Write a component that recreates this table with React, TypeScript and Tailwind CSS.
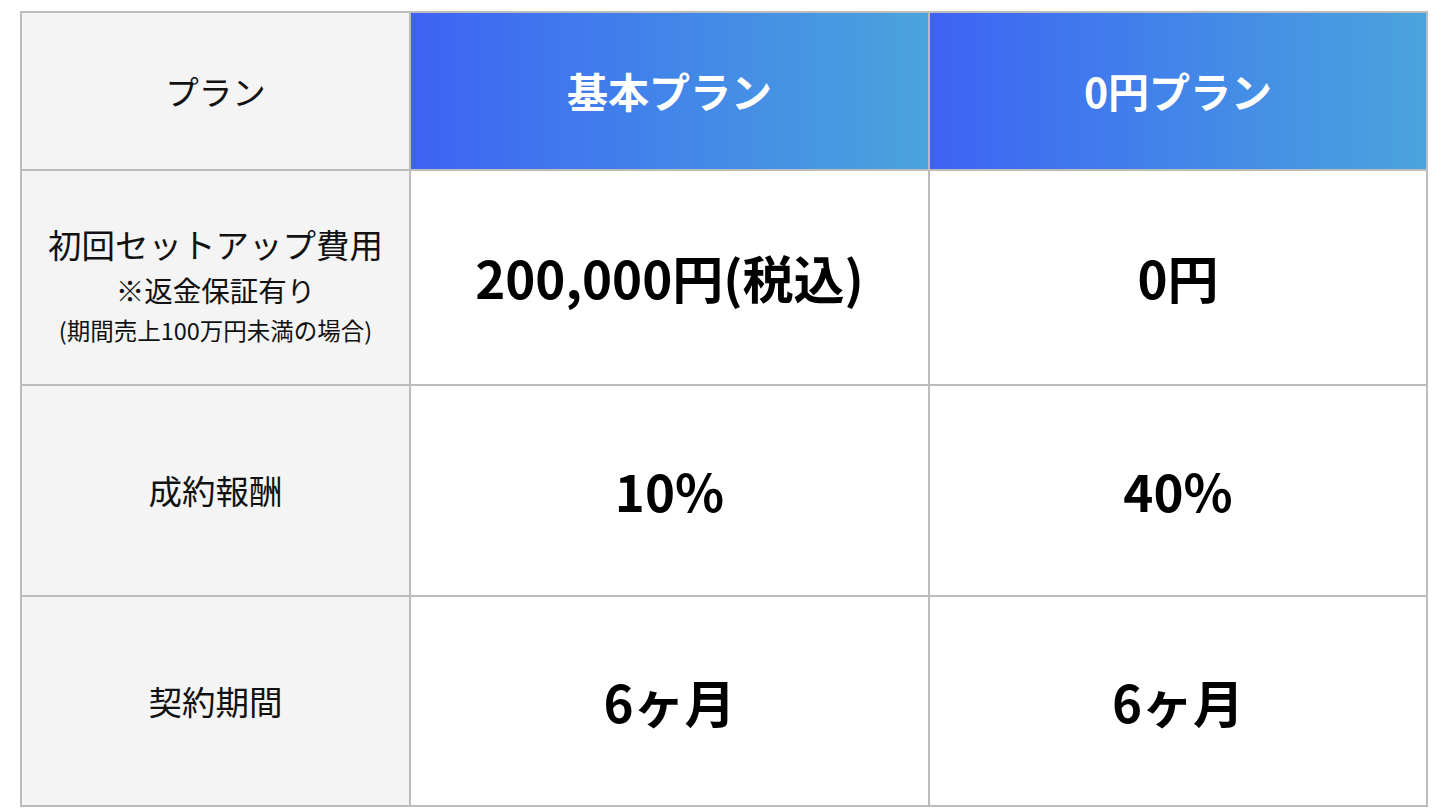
const FONT = '"Noto Sans CJK JP", "Noto Sans", sans-serif';

const rows: { label: React.ReactNode; basic: string; zero: string; h: string }[] = [
  {
    label: (
      <div className="flex flex-col items-center pt-[13px]">
        <span className="text-[33.5px] leading-[48px]">初回セットアップ費用</span>
        <span className="text-[28.5px] leading-[44px]">※返金保証有り</span>
        <span className="text-[23.5px] leading-[36px]">(期間売上100万円未満の場合)</span>
      </div>
    ),
    basic: '200,000円(税込)',
    zero: '0円',
    h: 'h-[215px]',
  },
  { label: <span className="text-[33.5px]">成約報酬</span>, basic: '10%', zero: '40%', h: 'h-[211px]' },
  { label: <span className="text-[33.5px]">契約期間</span>, basic: '6ヶ月', zero: '6ヶ月', h: 'h-[210px]' },
];

const headCell =
  'flex items-center justify-center border-r-2 border-b-2 border-[#bcbcbc] bg-gradient-to-r from-[#3f62f4] to-[#4ca3dc] text-[41px] font-bold text-white';

const valueCell =
  'flex items-center justify-center border-r-2 border-b-2 border-[#bcbcbc] bg-white text-[51px] font-bold text-black';

export default function App() {
  return (
    <div className="min-h-screen bg-white pl-[20px] pt-[11px]" style={{ fontFamily: FONT }}>
      <div className="grid w-[1408px] grid-cols-[389px_519px_498px] border-l-2 border-t-2 border-[#bcbcbc] text-[#111]">
        <div className="flex h-[158px] items-center justify-center border-r-2 border-b-2 border-[#bcbcbc] bg-[#f4f4f4] text-[33.5px]">
          プラン
        </div>
        <div className={`${headCell} h-[158px]`}>基本プラン</div>
        <div className={`${headCell} h-[158px]`}>0円プラン</div>

        {rows.map((r, i) => (
          <div key={i} className="contents">
            <div
              className={`flex ${r.h} items-center justify-center border-r-2 border-b-2 border-[#bcbcbc] bg-[#f4f4f4]`}
            >
              {r.label}
            </div>
            <div className={`${valueCell} ${r.h}`}>{r.basic}</div>
            <div className={`${valueCell} ${r.h}`}>{r.zero}</div>
          </div>
        ))}
      </div>
    </div>
  );
}
